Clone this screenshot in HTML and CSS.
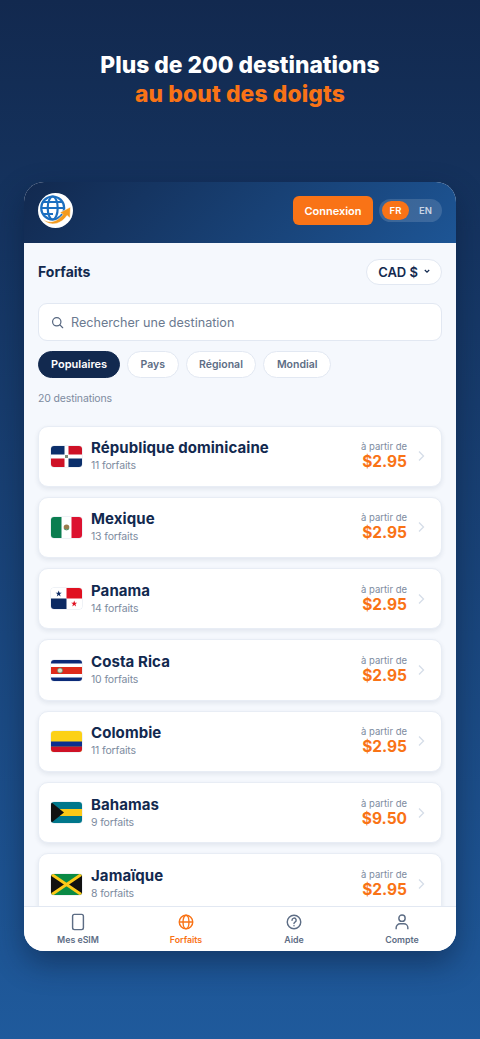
FILE: index.html
```html
<!DOCTYPE html>
<html lang="fr">

<head>
    <meta charset="UTF-8">
    <meta name="viewport" content="width=device-width, initial-scale=1.0">
    <title>Forfaits</title>
    <link rel="stylesheet" href="styles.css">
</head>

<body>
    <h1 class="hero">Plus de 200 destinations<span class="hero-accent">au bout des doigts</span></h1>

    <div class="phone">
        <div class="topbar">
            <svg class="logo" viewBox="0 0 35 35">
                <circle cx="17.500" cy="17.500" r="17.500" fill="#fff" />
                <g fill="none" stroke="#1c6fc0" stroke-width="2.200">
                    <circle cx="14.700" cy="15" r="11.500" />
                    <ellipse cx="14.700" cy="15" rx="5" ry="11.500" />
                    <path d="M3.200 15h23M5 9h19.500M5 21h10" />
                </g>
                <path d="M4.500 26C11 31 19 29 25 21.500L22 19.500 32.500 14l-.5 11-3-2.500C22 33 10 33 4.500 26z" fill="#f39a1e" stroke="#fff" stroke-width=".5" />
            </svg>
            <div class="topbar-actions">
                <button class="login">Connexion</button>
                <div class="lang">
                    <span class="lang-item active">FR</span>
                    <span class="lang-item">EN</span>
                </div>
            </div>
        </div>

        <div class="content">
            <div class="title-row">
                <h2 class="page-title">Forfaits</h2>
                <div class="currency">CAD $
                    <svg class="currency-chev" viewBox="0 0 6 5">
                        <path d="M.8 1 3 3.200 5.200 1" fill="none" stroke="#12294f" stroke-width="1.200" />
                    </svg>
                </div>
            </div>

            <div class="search">
                <svg class="search-icon" viewBox="0 0 14 14">
                    <circle cx="6.200" cy="6.200" r="4.500" fill="none" stroke="#56667f" stroke-width="1.300" />
                    <path d="m9.600 9.600 3 3" stroke="#56667f" stroke-width="1.300" stroke-linecap="round" />
                </svg>
                <span>Rechercher une destination</span>
            </div>

            <div class="tabs">
                <span class="tab active">Populaires</span>
                <span class="tab">Pays</span>
                <span class="tab">Régional</span>
                <span class="tab">Mondial</span>
            </div>

            <div class="count">20 destinations</div>

            <div class="list">
                <div class="card">
                    <svg class="flag" viewBox="0 0 31 21">
                        <rect width="31" height="21" fill="#fff" />
                        <rect width="13.500" height="8.500" fill="#0b2f6b" />
                        <rect x="17.500" width="13.500" height="8.500" fill="#ce1126" />
                        <rect y="12.500" width="13.500" height="8.500" fill="#ce1126" />
                        <rect x="17.500" y="12.500" width="13.500" height="8.500" fill="#0b2f6b" />
                        <rect x="14" y="9" width="3" height="3" fill="#7d8a78" />
                    </svg>
                    <div class="card-info">
                        <div class="card-name">République dominicaine</div>
                        <div class="card-sub">11 forfaits</div>
                    </div>
                    <div class="card-price">
                        <span class="from">à partir de</span>
                        <span class="price">$2.95</span>
                    </div>
                    <svg class="chev" viewBox="0 0 8 12"><path d="m2 1.500 4.500 4.500L2 10.500" /></svg>
                </div>

                <div class="card">
                    <svg class="flag" viewBox="0 0 31 21">
                        <rect width="31" height="21" fill="#fff" />
                        <rect width="10.500" height="21" fill="#0a7d50" />
                        <rect x="20.500" width="10.500" height="21" fill="#dc1230" />
                        <ellipse cx="15.500" cy="10" rx="2.800" ry="2.500" fill="#9a7b4d" />
                        <path d="M12.800 11.500c1.500 1.800 3.900 1.800 5.400 0" stroke="#3f8a5a" fill="none" />
                    </svg>
                    <div class="card-info">
                        <div class="card-name">Mexique</div>
                        <div class="card-sub">13 forfaits</div>
                    </div>
                    <div class="card-price">
                        <span class="from">à partir de</span>
                        <span class="price">$2.95</span>
                    </div>
                    <svg class="chev" viewBox="0 0 8 12"><path d="m2 1.500 4.500 4.500L2 10.500" /></svg>
                </div>

                <div class="card">
                    <svg class="flag" viewBox="0 0 31 21">
                        <rect width="31" height="21" fill="#fff" />
                        <rect x="15.500" width="15.500" height="10.500" fill="#e01020" />
                        <rect y="10.500" width="15.500" height="10.500" fill="#0b2a63" />
                        <path d="m7.700 2.500 .8 2.200h2.300l-1.900 1.400.7 2.300-1.900-1.400-1.900 1.400.7-2.300-1.900-1.400h2.300z" fill="#0b2a63" />
                        <path d="m23.200 12.500 .8 2.200h2.300l-1.900 1.400.7 2.300-1.900-1.400-1.900 1.400.7-2.300-1.900-1.400h2.300z" fill="#e01020" />
                    </svg>
                    <div class="card-info">
                        <div class="card-name">Panama</div>
                        <div class="card-sub">14 forfaits</div>
                    </div>
                    <div class="card-price">
                        <span class="from">à partir de</span>
                        <span class="price">$2.95</span>
                    </div>
                    <svg class="chev" viewBox="0 0 8 12"><path d="m2 1.500 4.500 4.500L2 10.500" /></svg>
                </div>

                <div class="card">
                    <svg class="flag" viewBox="0 0 31 21">
                        <rect width="31" height="21" fill="#0b2a78" />
                        <rect y="3.500" width="31" height="14" fill="#fff" />
                        <rect y="7" width="31" height="7" fill="#de2a1a" />
                        <ellipse cx="9" cy="10.500" rx="2.500" ry="2.500" fill="#d8e0c8" stroke="#5f8f6a" stroke-width=".8" />
                    </svg>
                    <div class="card-info">
                        <div class="card-name">Costa Rica</div>
                        <div class="card-sub">10 forfaits</div>
                    </div>
                    <div class="card-price">
                        <span class="from">à partir de</span>
                        <span class="price">$2.95</span>
                    </div>
                    <svg class="chev" viewBox="0 0 8 12"><path d="m2 1.500 4.500 4.500L2 10.500" /></svg>
                </div>

                <div class="card">
                    <svg class="flag" viewBox="0 0 31 21">
                        <rect width="31" height="21" fill="#fcd116" />
                        <rect y="10.500" width="31" height="5.250" fill="#0b2f8f" />
                        <rect y="15.750" width="31" height="5.250" fill="#ce1126" />
                    </svg>
                    <div class="card-info">
                        <div class="card-name">Colombie</div>
                        <div class="card-sub">11 forfaits</div>
                    </div>
                    <div class="card-price">
                        <span class="from">à partir de</span>
                        <span class="price">$2.95</span>
                    </div>
                    <svg class="chev" viewBox="0 0 8 12"><path d="m2 1.500 4.500 4.500L2 10.500" /></svg>
                </div>

                <div class="card">
                    <svg class="flag" viewBox="0 0 31 21">
                        <rect width="31" height="21" fill="#00778b" />
                        <rect y="7" width="31" height="7" fill="#fcc917" />
                        <path d="M0 0 13 10.500 0 21z" fill="#111" />
                    </svg>
                    <div class="card-info">
                        <div class="card-name">Bahamas</div>
                        <div class="card-sub">9 forfaits</div>
                    </div>
                    <div class="card-price">
                        <span class="from">à partir de</span>
                        <span class="price">$9.50</span>
                    </div>
                    <svg class="chev" viewBox="0 0 8 12"><path d="m2 1.500 4.500 4.500L2 10.500" /></svg>
                </div>

                <div class="card">
                    <svg class="flag" viewBox="0 0 31 21">
                        <rect width="31" height="21" fill="#0a8a45" />
                        <path d="M0 0 15.500 10.500 0 21zM31 0 15.500 10.500 31 21z" fill="#111" />
                        <path d="M0 0 31 21M31 0 0 21" stroke="#fcc917" stroke-width="3" />
                    </svg>
                    <div class="card-info">
                        <div class="card-name">Jamaïque</div>
                        <div class="card-sub">8 forfaits</div>
                    </div>
                    <div class="card-price">
                        <span class="from">à partir de</span>
                        <span class="price">$2.95</span>
                    </div>
                    <svg class="chev" viewBox="0 0 8 12"><path d="m2 1.500 4.500 4.500L2 10.500" /></svg>
                </div>
            </div>
        </div>

        <div class="bottom-nav">
            <div class="nav-item">
                <svg class="nav-icon" viewBox="0 0 20 20">
                    <rect x="4" y="1.500" width="12" height="17" rx="2" />
                </svg>
                Mes eSIM
            </div>
            <div class="nav-item active">
                <svg class="nav-icon" viewBox="0 0 20 20">
                    <circle cx="10" cy="10" r="7.500" />
                    <ellipse cx="10" cy="10" rx="3.300" ry="7.500" />
                    <path d="M2.500 10h15" />
                </svg>
                Forfaits
            </div>
            <div class="nav-item">
                <svg class="nav-icon" viewBox="0 0 20 20">
                    <circle cx="10" cy="10" r="7.500" />
                    <path d="M7.800 8a2.300 2.300 0 1 1 3.400 2c-.8.500-1.200 1-1.200 1.800M10 14v.1" stroke-linecap="round" />
                </svg>
                Aide
            </div>
            <div class="nav-item">
                <svg class="nav-icon" viewBox="0 0 20 20">
                    <circle cx="10" cy="5.800" r="3.500" />
                    <path d="M3.500 18v-1.500a4.500 4.500 0 0 1 4.500-4.500h4a4.500 4.500 0 0 1 4.500 4.500V18" />
                </svg>
                Compte
            </div>
        </div>
    </div>
</body>

</html>
```

FILE: styles.css
```css
* {
    box-sizing: border-box;
}

body {
    margin: 0;
    height: 1039px;
    overflow: hidden;
    font-family: "Inter", "Liberation Sans", sans-serif;
    background: linear-gradient(180deg, #12294f 0%, #1f5a9c 100%);
}

.hero {
    margin: 0;
    padding-top: 50px;
    height: 182px;
    text-align: center;
    font-size: 22.800px;
    line-height: 29px;
    font-weight: 800;
    color: #fff;
}

.hero-accent {
    display: block;
    letter-spacing: 0.150px;
    color: #f97316;
}

.phone {
    display: flex;
    flex-direction: column;
    width: 432px;
    height: 769px;
    margin: 0 auto;
    border-radius: 20px;
    overflow: hidden;
    background: #f5f8fd;
    box-shadow: 0 12px 30px rgba(8, 22, 48, 0.45);
}

.topbar {
    display: flex;
    align-items: center;
    justify-content: space-between;
    flex: none;
    height: 60.500px;
    padding: 0 14px 3px;
    background: linear-gradient(135deg, #12294f 0%, #1d5595 100%);
}

.logo {
    width: 35px;
    height: 35px;
}

.topbar-actions {
    display: flex;
    align-items: center;
    gap: 6px;
}

.login {
    width: 80px;
    height: 29px;
    padding: 0;
    border: none;
    border-radius: 6px;
    background: #f97316;
    color: #fff;
    font-family: inherit;
    font-size: 11px;
    font-weight: 600;
}

.lang {
    display: flex;
    align-items: center;
    gap: 3px;
    height: 23px;
    padding: 0 3px;
    border-radius: 12px;
    background: rgba(255, 255, 255, 0.14);
}

.lang-item {
    width: 27px;
    line-height: 19px;
    border-radius: 10px;
    text-align: center;
    font-size: 9.500px;
    font-weight: 600;
    color: #c9d4e4;
}

.lang-item.active {
    background: #f97316;
    color: #fff;
}

.content {
    flex: 1;
    min-height: 0;
    overflow: hidden;
    padding: 16px 14px 0;
}

.title-row {
    display: flex;
    align-items: center;
    justify-content: space-between;
    margin-bottom: 18.500px;
}

.page-title {
    margin: 0;
    font-size: 14px;
    font-weight: 700;
    color: #12294f;
}

.currency {
    display: flex;
    align-items: center;
    gap: 6px;
    height: 26px;
    padding: 0 11px;
    border: 1px solid #e2e8f2;
    border-radius: 13px;
    background: #fff;
    font-size: 13px;
    font-weight: 600;
    color: #12294f;
}

.currency-chev {
    width: 6px;
    height: 5px;
}

.search {
    display: flex;
    align-items: center;
    gap: 7px;
    height: 38px;
    padding: 0 12px;
    border: 1px solid #e2e8f2;
    border-radius: 9px;
    background: #fff;
    font-size: 12.600px;
    color: #6b7a90;
}

.search-icon {
    width: 13px;
    height: 13px;
}

.tabs {
    display: flex;
    gap: 7px;
    margin-top: 10px;
}

.tab {
    height: 27px;
    padding: 0 12.500px;
    border: 1px solid #e2e8f2;
    border-radius: 14px;
    background: #fff;
    font-size: 10.500px;
    font-weight: 600;
    line-height: 25px;
    color: #5d6d85;
}

.tab.active {
    padding: 0 12px;
    border-color: #12294f;
    background: #12294f;
    font-size: 11px;
    color: #fff;
}

.count {
    margin-top: 14px;
    margin-bottom: 19.500px;
    font-size: 10.500px;
    line-height: 14px;
    letter-spacing: -0.150px;
    color: #7d8ba0;
}

.list {
    display: flex;
    flex-direction: column;
    gap: 10px;
}

.card {
    display: flex;
    align-items: center;
    flex: none;
    height: 61.330px;
    padding: 0 14px 0 12px;
    border: 1px solid #e8edf5;
    border-radius: 10px;
    background: #fff;
    box-shadow: 0 2px 5px rgba(18, 41, 79, 0.09);
}

.flag {
    flex: none;
    width: 31px;
    height: 21px;
    border-radius: 3px;
    box-shadow: 0 0 0 0.500px #dfe5ee;
}

.card-info {
    flex: 1;
    min-width: 0;
    margin-left: 9px;
}

.card-name {
    font-size: 15px;
    line-height: 18px;
    font-weight: 700;
    letter-spacing: 0.080px;
    color: #12294f;
}

.card-sub {
    margin-top: 2px;
    font-size: 10.500px;
    line-height: 14px;
    letter-spacing: -0.150px;
    color: #7d8ba0;
}

.card-price {
    display: flex;
    flex-direction: column;
    align-items: flex-end;
}

.from {
    font-size: 9.500px;
    line-height: 12px;
    color: #7d8ba0;
}

.price {
    font-size: 15.500px;
    line-height: 18px;
    font-weight: 700;
    color: #f97316;
}

.chev {
    flex: none;
    width: 8px;
    height: 12px;
    margin-left: 10px;
    margin-right: 2px;
    fill: none;
    stroke: #d5dde8;
    stroke-width: 1.300;
}

.bottom-nav {
    display: flex;
    flex: none;
    height: 45px;
    border-top: 1px solid #e2e8f2;
    background: #fff;
}

.nav-item {
    display: flex;
    flex: 1;
    flex-direction: column;
    align-items: center;
    padding-top: 6px;
    font-size: 8.800px;
    line-height: 11px;
    font-weight: 600;
    color: #5d6d85;
}

.nav-item.active {
    color: #f97316;
}

.nav-icon {
    width: 18px;
    height: 18px;
    margin-bottom: 3px;
    fill: none;
    stroke: currentColor;
    stroke-width: 1.600;
}
```
